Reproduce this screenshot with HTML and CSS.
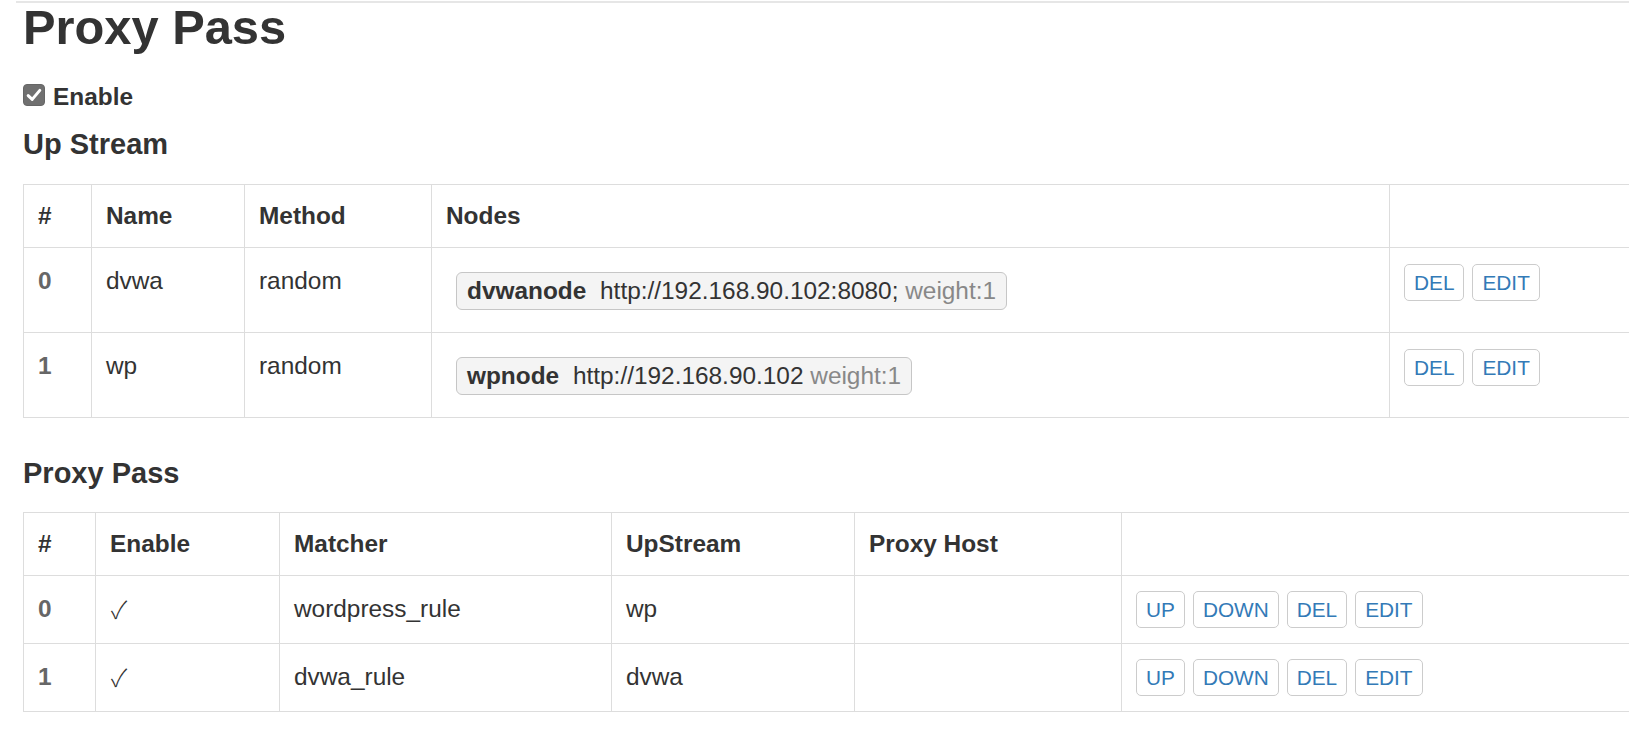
FILE: index.html
```html
<!DOCTYPE html>
<html lang="en">
<head>
<meta charset="utf-8">
<title>Proxy Pass</title>
<link rel="stylesheet" href="styles.css">
</head>
<body>
<main class="page">
  <div class="topbar"></div>
  <h1 class="title">Proxy Pass</h1>
  <label class="enable">
    <span class="checkbox"><svg width="22" height="22" viewBox="0 0 22 22"><rect x="0.5" y="0.5" width="21" height="21" rx="3.5" fill="#707070" stroke="#666"/><path d="M5.2 11.6 L9.2 15.4 L16.8 6.4" fill="none" stroke="#fff" stroke-width="3" stroke-linecap="round" stroke-linejoin="round"/></svg></span>
    Enable
  </label>

  <h3 class="section first">Up Stream</h3>
  <table class="grid upstream">
    <colgroup>
      <col class="c-idx"><col class="c-name"><col class="c-method"><col class="c-nodes"><col class="c-act">
    </colgroup>
    <thead>
      <tr><th>#</th><th>Name</th><th>Method</th><th>Nodes</th><th></th></tr>
    </thead>
    <tbody>
      <tr>
        <td class="idx">0</td>
        <td>dvwa</td>
        <td>random</td>
        <td><div class="nodes"><span class="node"><b class="node-name">dvwanode</b> <span class="node-url">http://192.168.90.102:8080;</span> <span class="node-weight">weight:1</span></span></div></td>
        <td><div class="actions"><button class="btn">DEL</button><button class="btn">EDIT</button></div></td>
      </tr>
      <tr>
        <td class="idx">1</td>
        <td>wp</td>
        <td>random</td>
        <td><div class="nodes"><span class="node"><b class="node-name">wpnode</b> <span class="node-url">http://192.168.90.102</span> <span class="node-weight">weight:1</span></span></div></td>
        <td><div class="actions"><button class="btn">DEL</button><button class="btn">EDIT</button></div></td>
      </tr>
    </tbody>
  </table>

  <h3 class="section">Proxy Pass</h3>
  <table class="grid proxies">
    <colgroup>
      <col class="c-idx"><col class="c-enable"><col class="c-matcher"><col class="c-up"><col class="c-host"><col class="c-act">
    </colgroup>
    <thead>
      <tr><th>#</th><th>Enable</th><th>Matcher</th><th>UpStream</th><th>Proxy Host</th><th></th></tr>
    </thead>
    <tbody>
      <tr>
        <td class="idx">0</td>
        <td><span class="tick">✓</span></td>
        <td>wordpress_rule</td>
        <td>wp</td>
        <td></td>
        <td><div class="actions"><button class="btn">UP</button><button class="btn">DOWN</button><button class="btn">DEL</button><button class="btn">EDIT</button></div></td>
      </tr>
      <tr>
        <td class="idx">1</td>
        <td><span class="tick">✓</span></td>
        <td>dvwa_rule</td>
        <td>dvwa</td>
        <td></td>
        <td><div class="actions"><button class="btn">UP</button><button class="btn">DOWN</button><button class="btn">DEL</button><button class="btn">EDIT</button></div></td>
      </tr>
    </tbody>
  </table>
</main>
</body>
</html>
```
FILE: styles.css
```css
html, body {
  margin: 0;
  padding: 0;
  background: #fff;
}
body {
  color: #333;
  font-family: "Liberation Sans", Arial, sans-serif;
  font-size: 24.4px;
  line-height: 34px;
  overflow: hidden;
}
.page {
  position: relative;
  padding-left: 23px;
  overflow: hidden;
}
.topbar {
  position: absolute;
  top: 1px;
  left: 16px;
  right: 0;
  height: 2px;
  background: #e6e6e6;
}
.title {
  margin: 0;
  font-size: 48.8px;
  line-height: 55px;
  font-weight: bold;
}
.enable {
  display: flex;
  align-items: center;
  margin-top: 25px;
  font-weight: bold;
  line-height: 34px;
}
.checkbox {
  display: block;
  width: 22px;
  height: 22px;
  margin: 0 8px 4px 0;
}
.checkbox svg {
  display: block;
}
.section {
  margin: 39px 0 0;
  font-size: 29px;
  line-height: 32px;
  font-weight: bold;
}
.section.first {
  margin-top: 14px;
}
.grid {
  border-collapse: collapse;
  table-layout: fixed;
  width: calc(100% + 6px);
  margin-top: 23px;
}
.grid.upstream {
  margin-top: 24px;
}
.grid th,
.grid td {
  border: 1px solid #ddd;
  padding: 14px 14px;
  text-align: left;
  vertical-align: top;
  line-height: 34px;
}
.grid td {
  padding: 16px 14px 12px;
}
.grid th {
  font-weight: bold;
}
.idx {
  font-weight: bold;
  color: #666;
}
.upstream .c-idx { width: 68px; }
.upstream .c-name { width: 153px; }
.upstream .c-method { width: 187px; }
.upstream .c-nodes { width: 958px; }
.proxies .c-idx { width: 72px; }
.proxies .c-enable { width: 184px; }
.proxies .c-matcher { width: 332px; }
.proxies .c-up { width: 243px; }
.proxies .c-host { width: 267px; }

.nodes {
  padding: 8px 0 10px 10px;
}
.node {
  display: inline-block;
  padding: 1px 10px;
  line-height: 34px;
  border: 1px solid #c6c6c6;
  border-radius: 6px;
  background: #f4f4f4;
  white-space: nowrap;
}
.node-name {
  margin-right: 7px;
  color: #333;
}
.node-url {
  color: #333;
}
.node-weight {
  color: #888;
}
.tick {
  font-family: "Noto Sans CJK SC", "DejaVu Sans", sans-serif;
  font-weight: 300;
  color: #333;
  margin-left: 1px;
}
.actions {
  display: flex;
  gap: 8px;
  padding: 0 0 2px;
}
.proxies .actions {
  margin-top: -1px;
  padding-bottom: 3px;
}
.btn {
  margin: 0;
  font-family: "Liberation Sans", Arial, sans-serif;
  font-size: 20.8px;
  line-height: 31px;
  padding: 2px 9px;
  border: 1px solid #ccc;
  border-radius: 5px;
  color: #337ab7;
  background: #fff;
}
```
